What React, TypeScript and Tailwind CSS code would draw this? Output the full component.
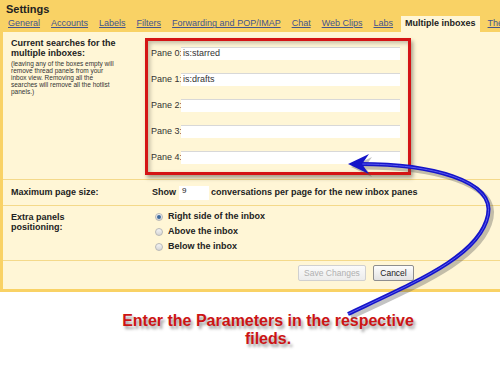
const tabs = [
  'General',
  'Accounts',
  'Labels',
  'Filters',
  'Forwarding and POP/IMAP',
  'Chat',
  'Web Clips',
  'Labs',
];

const panes = ['is:starred', 'is:drafts', '', '', ''];

const positions = ['Right side of the inbox', 'Above the inbox', 'Below the inbox'];

const Radio = ({ checked }: { checked: boolean }) => (
  <span className="flex h-[8px] w-[8px] items-center justify-center rounded-full border border-[#b8b8b8] bg-[linear-gradient(#f4f4f4,#d6d6d6)]">
    {checked && <span className="h-[4px] w-[4px] rounded-full bg-[#3d6a9e]" />}
  </span>
);

const Arrow = () => (
  <svg className="pointer-events-none absolute left-0 top-0" width="500" height="366" viewBox="0 0 500 366">
    <g transform="translate(3 3)" opacity="0.35">
      <path d="M360 164 C430 164, 495 180, 488 215 C480 255, 420 280, 348 314" fill="none" stroke="#555" strokeWidth="5" />
      <polygon points="348,164 369,154 362,164 369,174" fill="#555" />
    </g>
    <path d="M360 164 C430 164, 495 180, 488 215 C480 255, 420 280, 348 314" fill="none" stroke="#1515c8" strokeWidth="4" />
    <path d="M360 164 C430 164, 495 180, 488 215 C480 255, 420 280, 348 314" fill="none" stroke="#5a5af0" strokeWidth="1" />
    <polygon points="348,164 369,154 362,164 369,174" fill="#1515c8" />
  </svg>
);

export default function App() {
  return (
    <div className="relative h-[366px] w-[500px] overflow-hidden bg-white font-['Liberation_Sans',Arial,sans-serif] text-[#222]">
      <div className="bg-[#f9d265] pb-[3px] pl-[3px]">
        <div className="h-[16px] pl-[3px] pt-[4px] text-[11px] font-bold leading-none">Settings</div>
        <div className="flex h-[16px] items-center gap-[11px] overflow-hidden whitespace-nowrap pl-[5px] text-[9px]">
          {tabs.map((t) => (
            <span key={t} className="text-[#44548c] underline">
              {t}
            </span>
          ))}
          <span className="-mx-[3px] flex h-[16px] items-center bg-[#fff6d6] px-[4px] font-bold">
            Multiple inboxes
          </span>
          <span className="text-[#44548c] underline">The</span>
        </div>

        <div className="h-[257px] bg-[#fff6d6] text-[9px]">
          <div className="flex border-b border-[#f4d98a] pb-[4px] pt-[6px]">
            <div className="w-[142px] pl-[8px] pr-[20px]">
              <div className="text-[9px] font-bold leading-[10px]">Current searches for the multiple inboxes:</div>
              <div className="mt-[2px] w-[106px] text-[6.5px] leading-[7px] text-[#333]">
                (leaving any of the boxes empty will remove thread panels from your inbox view. Removing all the
                searches will remove all the hotlist panels.)
              </div>
            </div>
            <div className="flex w-[266px] flex-col gap-[13px] border-[3px] border-[#d41414] pb-[8px] pl-[3px] pr-[8px] pt-[6px] shadow-[2px_3px_4px_rgba(0,0,0,0.35),inset_2px_2px_4px_rgba(0,0,0,0.25)]">
              {panes.map((v, i) => (
                <div key={i} className="flex h-[13px] items-center">
                  <span className="w-[30px] shrink-0 whitespace-nowrap text-[#333]">Pane {i}:</span>
                  <div className="flex h-[13px] flex-1 items-center border-t border-[#d8d8d8] bg-white pl-[2px] text-[#333]">
                    {v}
                  </div>
                </div>
              ))}
            </div>
          </div>

          <div className="flex h-[26px] items-center border-b border-[#f4d98a] font-bold">
            <div className="w-[149px] pl-[8px]">Maximum page size:</div>
            <span>Show</span>
            <span className="ml-[3px] mr-[2px] h-[14px] w-[30px] bg-white pl-[3px] text-[8px] font-normal leading-[10px]">
              9
            </span>
            <span>conversations per page for the new inbox panes</span>
          </div>

          <div className="flex h-[55px] border-b border-[#f4d98a] pt-[6px] font-bold">
            <div className="w-[152px] pl-[8px] leading-[10px]">
              Extra panels
              <br />
              positioning:
            </div>
            <div className="flex flex-col gap-[5px]">
              {positions.map((p, i) => (
                <div key={p} className="flex h-[10px] items-center gap-[5px]">
                  <Radio checked={i === 0} />
                  <span>{p}</span>
                </div>
              ))}
            </div>
          </div>

          <div className="flex justify-end gap-[7px] pr-[86px] pt-[4px]">
            <span className="flex h-[16px] w-[68px] items-center justify-center rounded-[2px] border border-[#d0d0d0] bg-[linear-gradient(#fbfbfb,#ececec)] text-[8.5px] text-[#b0b0b0]">
              Save Changes
            </span>
            <span className="flex h-[16px] w-[41px] items-center justify-center rounded-[2px] border border-[#8e8e8e] bg-[linear-gradient(#fdfdfd,#e2e2e2)] text-[8.5px] text-[#222]">
              Cancel
            </span>
          </div>
        </div>
      </div>

      <div className="pl-[36px] pt-[20px] text-center text-[16px] font-bold leading-[18px] text-[#cc1414] [text-shadow:2px_3px_3px_rgba(0,0,0,0.4)]">
        Enter the Parameters in the respective
        <br />
        fileds.
      </div>

      <Arrow />
    </div>
  );
}
